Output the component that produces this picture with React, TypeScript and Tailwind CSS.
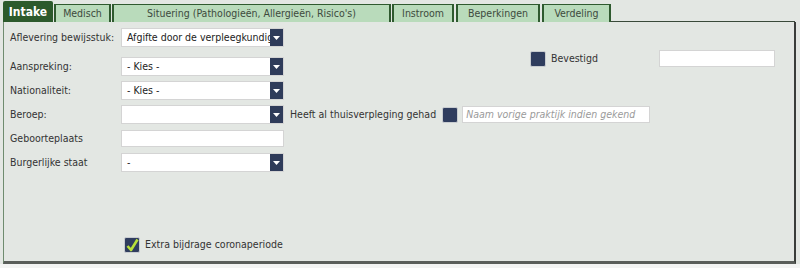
import * as React from 'react';

const tabs = [
  { label: 'Medisch', w: 'w-[57px]', ml: 'ml-[1px]' },
  { label: "Situering (Pathologieën, Allergieën, Risico's)", w: 'w-[279px]', ml: 'ml-[1px]' },
  { label: 'Instroom', w: 'w-[62px]', ml: 'ml-[1px]' },
  { label: 'Beperkingen', w: 'w-[84px]', ml: 'ml-[2px]' },
  { label: 'Verdeling', w: 'w-[69px]', ml: 'ml-[2px]' },
];

function Select({ value }: { value: string }) {
  return (
    <div className="flex h-[19px] w-[163px] shrink-0 border border-[#d4d4d4] bg-white">
      <div className="flex-1 overflow-hidden whitespace-nowrap pl-[5px] leading-[17px] text-[#222]">{value}</div>
      <div className="flex w-[13px] items-center justify-center bg-[#2f3c5a]">
        <svg width="7" height="4" viewBox="0 0 7 4">
          <path d="M0 0h7L3.5 4z" fill="#fff" />
        </svg>
      </div>
    </div>
  );
}

function TextBox({ w, placeholder }: { w: string; placeholder?: string }) {
  return (
    <div
      className={`h-[17px] ${w} shrink-0 overflow-hidden whitespace-nowrap border border-[#d4d4d4] bg-white pl-[3px] leading-[15px] italic text-[#9a9a9a]`}
    >
      {placeholder}
    </div>
  );
}

function Check({ checked }: { checked?: boolean }) {
  return (
    <div className="relative h-[16px] w-[16px] shrink-0 rounded-[2px] border border-[#c8ccd0] bg-[#2f3d5e]">
      {checked && (
        <svg className="absolute left-[1px] top-0" width="13" height="14" viewBox="0 0 13 14">
          <path d="M1.5 8 L5 12 L11.5 1.5" stroke="#b8e03a" strokeWidth="2.6" fill="none" strokeLinejoin="round" />
        </svg>
      )}
    </div>
  );
}

function Row({ label, children, className = '' }: { label: string; children: React.ReactNode; className?: string }) {
  return (
    <div className={`flex items-center ${className}`}>
      <div className="w-[111px] shrink-0 whitespace-nowrap">{label}</div>
      {children}
    </div>
  );
}

export default function App() {
  return (
    <div className="flex h-[268px] w-[800px] flex-col overflow-hidden bg-[#e3e7e3] font-['DejaVu_Sans_Condensed','DejaVu_Sans',sans-serif] text-[10.5px] text-[#333]">
      <div className="flex h-[22px] shrink-0 items-end pl-[3px] pt-[2px]">
        <div className="flex h-[21px] w-[50px] items-center justify-center rounded-t-[2px] bg-[#2c5a2c] text-[12px] font-bold text-white">
          Intake
        </div>
        {tabs.map((t) => (
          <div
            key={t.label}
            className={`${t.ml} flex h-[18px] ${t.w} items-center justify-center whitespace-nowrap border-x-2 border-t border-[#2f5a2f] bg-[#b9dbbb] text-[#3d4a3d]`}
          >
            {t.label}
          </div>
        ))}
        <div className="mr-[5px] h-[1px] flex-1 self-end bg-[#3a4a3a]" />
      </div>
      <div className="ml-[3px] flex h-[242px] w-[793px] shrink-0 border-b-[3px] border-l border-r-2 border-b-[#5a5e5a] border-l-[#6f8c6f] border-r-[#3a3d3a] pb-[8px] pl-[6px] pt-[6px]">
        <div className="flex w-[280px] shrink-0 flex-col">
          <Row label="Aflevering bewijsstuk:">
            <Select value="Afgifte door de verpleegkundige" />
          </Row>
          <Row label="Aanspreking:" className="mt-[10px]">
            <Select value="- Kies -" />
          </Row>
          <Row label="Nationaliteit:" className="mt-[5px]">
            <Select value="- Kies -" />
          </Row>
          <Row label="Beroep:" className="mt-[5px] w-max">
            <Select value="" />
            <div className="ml-[6px] whitespace-nowrap">Heeft al thuisverpleging gehad</div>
            <div className="ml-[6px]">
              <Check />
            </div>
            <div className="ml-[4px]">
              <TextBox w="w-[188px]" placeholder="Naam vorige praktijk indien gekend" />
            </div>
          </Row>
          <Row label="Geboorteplaats" className="mt-[6px]">
            <TextBox w="w-[163px]" />
          </Row>
          <Row label="Burgerlijke staat" className="mt-[6px]">
            <Select value="-" />
          </Row>
          <div className="mt-auto flex items-center gap-[5px] pl-[114px]">
            <Check checked />
            <div className="whitespace-nowrap">Extra bijdrage coronaperiode</div>
          </div>
        </div>
        <div className="ml-[240px] mt-[22px] flex h-[17px] items-center">
          <Check />
          <div className="ml-[5px] w-[108px]">Bevestigd</div>
          <TextBox w="w-[116px]" />
        </div>
      </div>
      <div className="flex-1 bg-[#f3f4f3]" />
    </div>
  );
}
